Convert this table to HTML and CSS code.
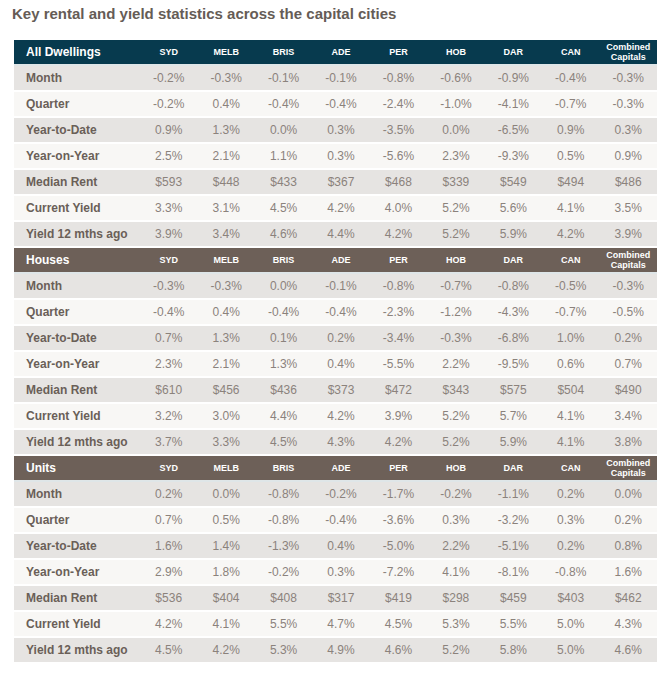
FILE: index.html
```html
<!DOCTYPE html>
<html>
    <head>
        <title>Key rental and yield statistics</title>
        <link rel="stylesheet" href="styles.css">
    </head>
    <body>
        <h1 class="title">Key rental and yield statistics across the capital cities</h1>
        <table class="stats">
            <colgroup>
                <col class="col-label">
                <col span="9">
            </colgroup>
            <tbody class="dwellings">
                <tr class="head">
                    <th class="label">All Dwellings</th>
                    <th>SYD</th><th>MELB</th><th>BRIS</th><th>ADE</th><th>PER</th><th>HOB</th><th>DAR</th><th>CAN</th><th>Combined<br>Capitals</th>
                </tr>
                <tr><td class="label">Month</td><td>-0.2%</td><td>-0.3%</td><td>-0.1%</td><td>-0.1%</td><td>-0.8%</td><td>-0.6%</td><td>-0.9%</td><td>-0.4%</td><td>-0.3%</td></tr>
                <tr><td class="label">Quarter</td><td>-0.2%</td><td>0.4%</td><td>-0.4%</td><td>-0.4%</td><td>-2.4%</td><td>-1.0%</td><td>-4.1%</td><td>-0.7%</td><td>-0.3%</td></tr>
                <tr><td class="label">Year-to-Date</td><td>0.9%</td><td>1.3%</td><td>0.0%</td><td>0.3%</td><td>-3.5%</td><td>0.0%</td><td>-6.5%</td><td>0.9%</td><td>0.3%</td></tr>
                <tr><td class="label">Year-on-Year</td><td>2.5%</td><td>2.1%</td><td>1.1%</td><td>0.3%</td><td>-5.6%</td><td>2.3%</td><td>-9.3%</td><td>0.5%</td><td>0.9%</td></tr>
                <tr><td class="label">Median Rent</td><td>$593</td><td>$448</td><td>$433</td><td>$367</td><td>$468</td><td>$339</td><td>$549</td><td>$494</td><td>$486</td></tr>
                <tr><td class="label">Current Yield</td><td>3.3%</td><td>3.1%</td><td>4.5%</td><td>4.2%</td><td>4.0%</td><td>5.2%</td><td>5.6%</td><td>4.1%</td><td>3.5%</td></tr>
                <tr><td class="label">Yield 12 mths ago</td><td>3.9%</td><td>3.4%</td><td>4.6%</td><td>4.4%</td><td>4.2%</td><td>5.2%</td><td>5.9%</td><td>4.2%</td><td>3.9%</td></tr>
            </tbody>
            <tbody class="houses">
                <tr class="head">
                    <th class="label">Houses</th>
                    <th>SYD</th><th>MELB</th><th>BRIS</th><th>ADE</th><th>PER</th><th>HOB</th><th>DAR</th><th>CAN</th><th>Combined<br>Capitals</th>
                </tr>
                <tr><td class="label">Month</td><td>-0.3%</td><td>-0.3%</td><td>0.0%</td><td>-0.1%</td><td>-0.8%</td><td>-0.7%</td><td>-0.8%</td><td>-0.5%</td><td>-0.3%</td></tr>
                <tr><td class="label">Quarter</td><td>-0.4%</td><td>0.4%</td><td>-0.4%</td><td>-0.4%</td><td>-2.3%</td><td>-1.2%</td><td>-4.3%</td><td>-0.7%</td><td>-0.5%</td></tr>
                <tr><td class="label">Year-to-Date</td><td>0.7%</td><td>1.3%</td><td>0.1%</td><td>0.2%</td><td>-3.4%</td><td>-0.3%</td><td>-6.8%</td><td>1.0%</td><td>0.2%</td></tr>
                <tr><td class="label">Year-on-Year</td><td>2.3%</td><td>2.1%</td><td>1.3%</td><td>0.4%</td><td>-5.5%</td><td>2.2%</td><td>-9.5%</td><td>0.6%</td><td>0.7%</td></tr>
                <tr><td class="label">Median Rent</td><td>$610</td><td>$456</td><td>$436</td><td>$373</td><td>$472</td><td>$343</td><td>$575</td><td>$504</td><td>$490</td></tr>
                <tr><td class="label">Current Yield</td><td>3.2%</td><td>3.0%</td><td>4.4%</td><td>4.2%</td><td>3.9%</td><td>5.2%</td><td>5.7%</td><td>4.1%</td><td>3.4%</td></tr>
                <tr><td class="label">Yield 12 mths ago</td><td>3.7%</td><td>3.3%</td><td>4.5%</td><td>4.3%</td><td>4.2%</td><td>5.2%</td><td>5.9%</td><td>4.1%</td><td>3.8%</td></tr>
            </tbody>
            <tbody class="units">
                <tr class="head">
                    <th class="label">Units</th>
                    <th>SYD</th><th>MELB</th><th>BRIS</th><th>ADE</th><th>PER</th><th>HOB</th><th>DAR</th><th>CAN</th><th>Combined<br>Capitals</th>
                </tr>
                <tr><td class="label">Month</td><td>0.2%</td><td>0.0%</td><td>-0.8%</td><td>-0.2%</td><td>-1.7%</td><td>-0.2%</td><td>-1.1%</td><td>0.2%</td><td>0.0%</td></tr>
                <tr><td class="label">Quarter</td><td>0.7%</td><td>0.5%</td><td>-0.8%</td><td>-0.4%</td><td>-3.6%</td><td>0.3%</td><td>-3.2%</td><td>0.3%</td><td>0.2%</td></tr>
                <tr><td class="label">Year-to-Date</td><td>1.6%</td><td>1.4%</td><td>-1.3%</td><td>0.4%</td><td>-5.0%</td><td>2.2%</td><td>-5.1%</td><td>0.2%</td><td>0.8%</td></tr>
                <tr><td class="label">Year-on-Year</td><td>2.9%</td><td>1.8%</td><td>-0.2%</td><td>0.3%</td><td>-7.2%</td><td>4.1%</td><td>-8.1%</td><td>-0.8%</td><td>1.6%</td></tr>
                <tr><td class="label">Median Rent</td><td>$536</td><td>$404</td><td>$408</td><td>$317</td><td>$419</td><td>$298</td><td>$459</td><td>$403</td><td>$462</td></tr>
                <tr><td class="label">Current Yield</td><td>4.2%</td><td>4.1%</td><td>5.5%</td><td>4.7%</td><td>4.5%</td><td>5.3%</td><td>5.5%</td><td>5.0%</td><td>4.3%</td></tr>
                <tr><td class="label">Yield 12 mths ago</td><td>4.5%</td><td>4.2%</td><td>5.3%</td><td>4.9%</td><td>4.6%</td><td>5.2%</td><td>5.8%</td><td>5.0%</td><td>4.6%</td></tr>
            </tbody>
        </table>
    </body>
</html>
```

FILE: styles.css
```css
body {
    margin: 0;
    background-color: #ffffff;
    font-family: "Liberation Sans", Arial, sans-serif;
}
.title {
    margin: 0;
    padding: 6px 0 0 12px;
    font-size: 15px;
    line-height: 16px;
    font-weight: bold;
    color: #655c56;
}
.stats {
    margin: 18px 0 0 14px;
    width: 643px;
    table-layout: fixed;
    border-collapse: collapse;
    border-spacing: 0;
}
.col-label {
    width: 126px;
}
.stats td,
.stats th {
    padding: 0;
    text-align: center;
    vertical-align: middle;
}
.stats td {
    height: 24px;
    border-bottom: 2px solid #ffffff;
    font-size: 12px;
    color: #8b827c;
}
.stats tr:nth-child(even) td {
    background-color: #e6e4e2;
}
.stats tr:nth-child(odd) td {
    background-color: #f8f7f5;
}
.stats .label {
    text-align: left;
    padding-left: 12px;
    font-weight: bold;
    color: #6a5f58;
}
.head th {
    height: 24px;
    border-bottom: 2px solid #dfe6e8;
    font-size: 9px;
    line-height: 10px;
    font-weight: bold;
    color: #ffffff;
}
.head th.label {
    font-size: 12px;
    color: #ffffff;
}
.dwellings .head th {
    background-color: #073a4e;
}
.houses .head th,
.units .head th {
    background-color: #6d6058;
}
```
